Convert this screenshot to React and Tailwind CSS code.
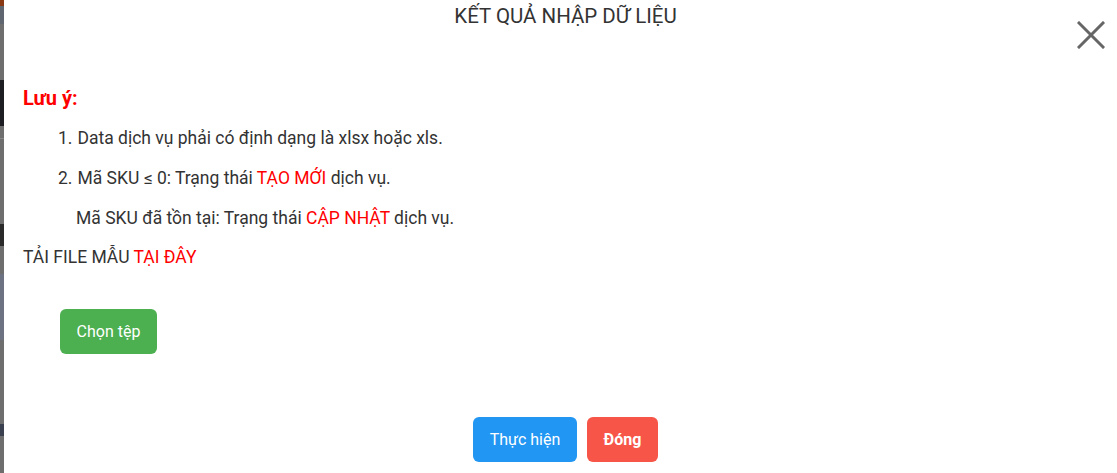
const notes = [
  { n: '1.', parts: [['Data dịch vụ phải có định dạng là xlsx hoặc xls.']] },
  { n: '2.', parts: [['Mã SKU ≤ 0: Trạng thái '], ['TẠO MỚI', true], [' dịch vụ.']] },
];

export default function App() {
  return (
    <div className="flex h-[473px] w-screen overflow-hidden bg-white font-['Roboto',sans-serif] text-[#333]">
      {/* page behind the modal */}
      <div className="flex w-[4px] shrink-0 flex-col bg-[#6e6e6e]">
        <div className="h-[6px] bg-[#8a3a12]"></div>
        <div className="h-[18px] bg-[#5f6670]"></div>
        <div className="h-[56px]"></div>
        <div className="h-[46px] bg-[#1c1e24]"></div>
        <div className="h-[12px]"></div>
        <div className="h-px bg-[#888]"></div>
        <div className="h-[85px]"></div>
        <div className="h-[22px] bg-[#2a2a2a]"></div>
        <div className="h-[28px]"></div>
        <div className="h-[66px] bg-[#6c7282]"></div>
        <div className="h-[84px]"></div>
        <div className="h-[12px] bg-[#3a4050]"></div>
      </div>

      <div className="relative flex w-[1123px] shrink-0 flex-col">
        <h1 className="pt-[4px] text-center text-[20.5px] leading-[25px]">KẾT QUẢ NHẬP DỮ LIỆU</h1>
        <button className="absolute right-[22px] top-[21px] text-[#666]">
          <svg width="28" height="28" viewBox="0 0 28 28" stroke="currentColor" strokeWidth="3" strokeLinecap="square">
            <path d="M2 2 L26 26 M26 2 L2 26" />
          </svg>
        </button>

        <div className="pl-[19px] pt-[56px]">
          <p className="text-[20px] font-bold leading-[26px] text-[#ff0000]">Lưu ý:</p>
          <ol className="mt-[14px] flex flex-col gap-[14px] pl-[35px] text-[17.5px] leading-[26px]">
            {notes.map((item) => (
              <li key={item.n} className="flex gap-[5px]">
                <span>{item.n}</span>
                <span>
                  {item.parts.map(([t, red], i) => (
                    <span key={i} className={red ? 'text-[#ff0000]' : ''}>{t}</span>
                  ))}
                </span>
              </li>
            ))}
            <li className="pl-[18px]">
              Mã SKU đã tồn tại: Trạng thái <span className="text-[#ff0000]">CẬP NHẬT</span> dịch vụ.
            </li>
          </ol>
          <p className="mt-[13px] text-[17.5px] leading-[26px]">
            TẢI FILE MẪU <span className="text-[#ff0000]">TẠI ĐÂY</span>
          </p>
          <button className="ml-[37px] mt-[39px] h-[45px] w-[97px] rounded-[6px] bg-[#4caf50] text-[16px] text-white">
            Chọn tệp
          </button>
        </div>

        <div className="mt-auto flex justify-center gap-[10px] pb-[11px]">
          <button className="h-[45px] w-[104px] rounded-[6px] bg-[#2196f3] text-[16px] text-white">Thực hiện</button>
          <button className="h-[45px] w-[71px] rounded-[6px] bg-[#f75548] text-[16px] font-bold text-white">Đóng</button>
        </div>
      </div>
    </div>
  );
}
